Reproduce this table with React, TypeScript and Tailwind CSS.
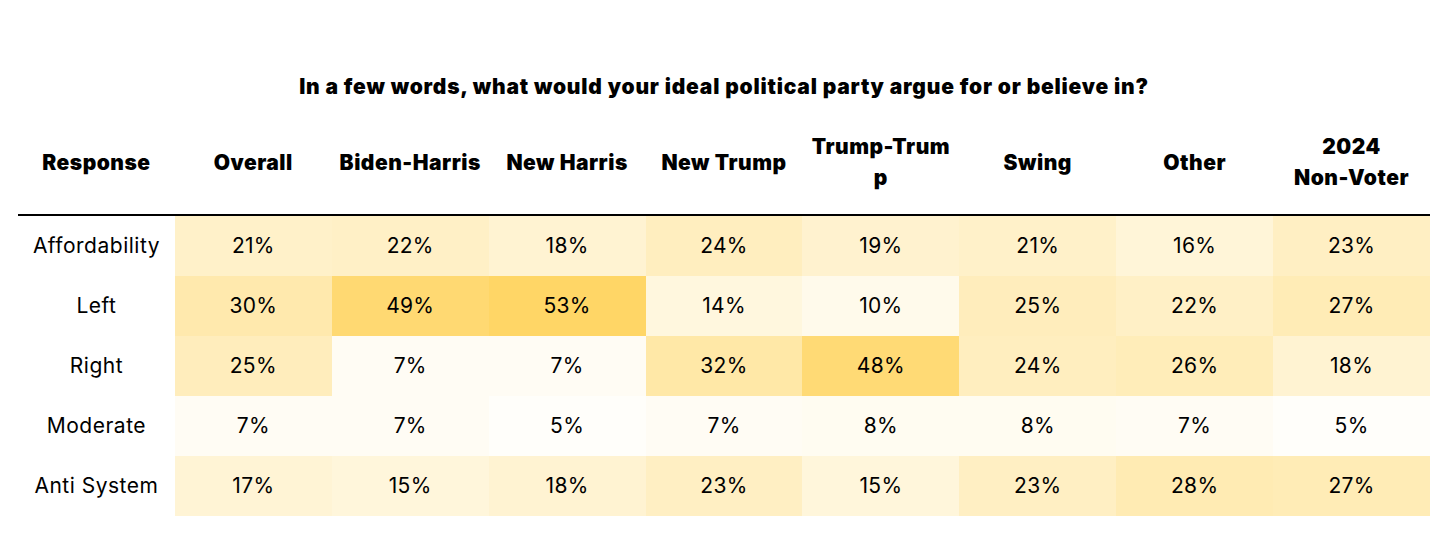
const columns: { label: string[] }[] = [
  { label: ["Response"] },
  { label: ["Overall"] },
  { label: ["Biden-Harris"] },
  { label: ["New Harris"] },
  { label: ["New Trump"] },
  { label: ["Trump-Trum", "p"] },
  { label: ["Swing"] },
  { label: ["Other"] },
  { label: ["2024", "Non-Voter"] },
];

const rows: { name: string; values: number[] }[] = [
  { name: "Affordability", values: [21, 22, 18, 24, 19, 21, 16, 23] },
  { name: "Left", values: [30, 49, 53, 14, 10, 25, 22, 27] },
  { name: "Right", values: [25, 7, 7, 32, 48, 24, 26, 18] },
  { name: "Moderate", values: [7, 7, 5, 7, 8, 8, 7, 5] },
  { name: "Anti System", values: [17, 15, 18, 23, 15, 23, 28, 27] },
];

// heat colour from the cell value (5% -> near white, 53% -> saturated yellow)
function heat(v: number) {
  const t = Math.max(0, Math.min(1, (v - 5) / 48));
  const g = Math.round(254 - 40 * t);
  const b = Math.round(250 - 148 * t);
  return `rgb(255, ${g}, ${b})`;
}

export default function App() {
  return (
    <div className="w-[1456px] h-[553px] bg-white text-black pt-[74px] font-['Inter',sans-serif]">
      <div className="ml-[18px] w-[1412px]">
        <h1 className="text-center text-[21px] leading-[26px] font-black tracking-[0.8px]">
          In a few words, what would your ideal political party argue for or believe in?
        </h1>

        {/* Header */}
        <div className="grid grid-cols-9 mt-[10px] h-[106px] items-center border-b-2 border-black">
          {columns.map((c) => (
            <div
              key={c.label.join("")}
              className="text-center text-[21px] leading-[31px] font-black tracking-[0.5px]"
            >
              {c.label.map((l) => (
                <div key={l}>{l}</div>
              ))}
            </div>
          ))}
        </div>

        {/* Body */}
        {rows.map((r) => (
          <div key={r.name} className="grid grid-cols-9 h-[60px]">
            <div className="flex items-center justify-center text-[21px] tracking-[0.5px]">{r.name}</div>
            {r.values.map((v, i) => (
              <div
                key={i}
                className="flex items-center justify-center text-[21px] tracking-[0.3px]"
                style={{ backgroundColor: heat(v) }}
              >
                {v}%
              </div>
            ))}
          </div>
        ))}
      </div>
    </div>
  );
}
